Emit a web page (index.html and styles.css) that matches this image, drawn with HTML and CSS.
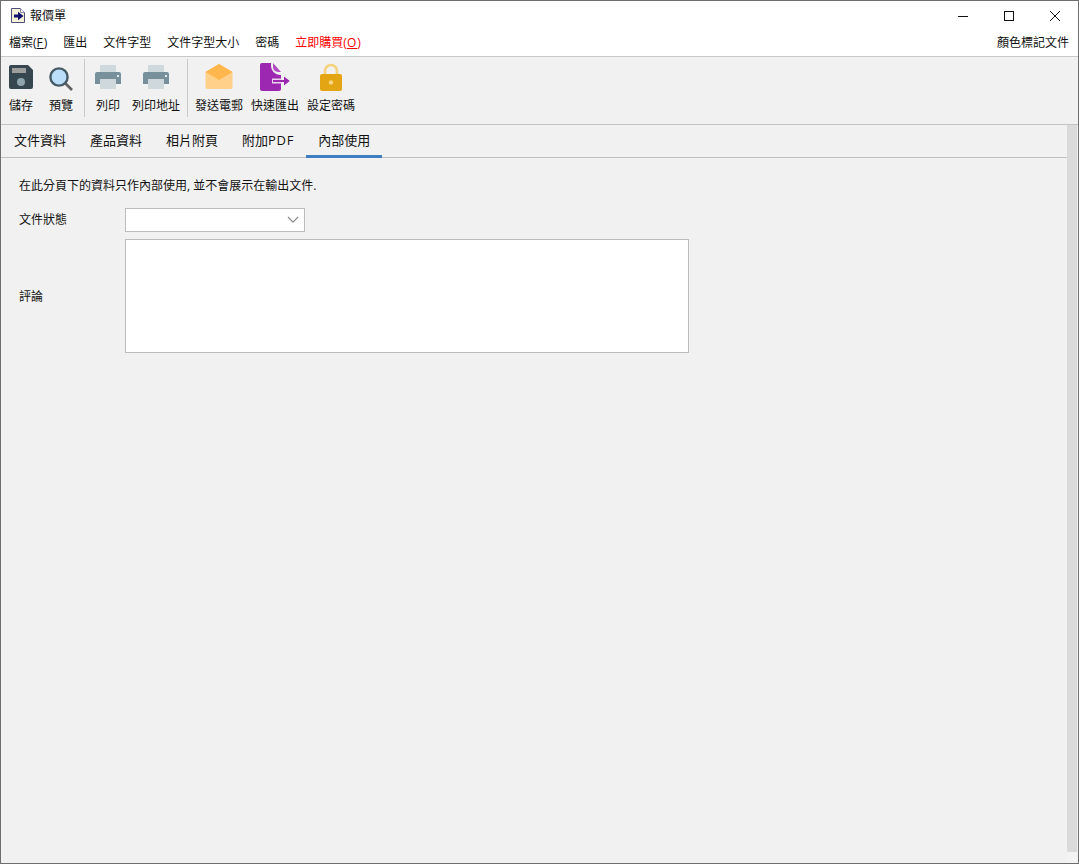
FILE: index.html
```html
<!DOCTYPE html>
<html lang="zh-Hant">
<head>
  <meta charset="UTF-8">
  <title>報價單</title>
  <link rel="stylesheet" href="styles.css">
</head>
<body>
  <div class="window">
    <header class="titlebar">
      <svg class="app-icon" width="14" height="16" viewBox="0 0 14 16">
        <path d="M.5 .5H9.5L13.5 4.5V14.5H.5Z" fill="#f5f1d6" stroke="#4d4d80"/>
        <path d="M9.5 .5V4.5H13.5" fill="#fff" stroke="#8a8aa8"/>
        <path d="M3 6.5H7V3.8L12.5 8L7 12.2V9.5H3Z" fill="#12126e"/>
      </svg>
      <span class="title">報價單</span>
      <div class="win-controls">
        <svg width="46" height="30" viewBox="0 0 46 30"><path d="M18 15.5H28" stroke="#111"/></svg>
        <svg width="46" height="30" viewBox="0 0 46 30"><rect x="18.5" y="10.5" width="9" height="9" fill="none" stroke="#111"/></svg>
        <svg width="46" height="30" viewBox="0 0 46 30"><path d="M18 10L28 20M28 10L18 20" stroke="#111"/></svg>
      </div>
    </header>

    <nav class="menubar">
      <span>檔案(<u>F</u>)</span>
      <span>匯出</span>
      <span>文件字型</span>
      <span>文件字型大小</span>
      <span>密碼</span>
      <span class="buy">立即購買(<u>O</u>)</span>
      <span class="menu-right">顏色標記文件</span>
    </nav>

    <div class="toolbar">
      <div class="tool">
        <svg width="24" height="28" viewBox="0 0 24 28">
          <path d="M2 2H19L24 7V24A2 2 0 0 1 22 26H2A2 2 0 0 1 0 24V4A2 2 0 0 1 2 2Z" fill="#37474f"/>
          <rect x="3" y="5" width="14" height="5" fill="#9e9e9e"/>
          <circle cx="12" cy="19" r="4" fill="#90a4ae"/>
        </svg>
        <span>儲存</span>
      </div>
      <div class="tool">
        <svg width="24" height="28" viewBox="0 0 24 28">
          <path d="M15 19L23 27" stroke="#616161" stroke-width="2.6"/>
          <circle cx="10" cy="14" r="8.6" fill="#bbdefb" stroke="#455a64" stroke-width="2.4"/>
        </svg>
        <span>預覽</span>
      </div>
      <div class="sep"></div>
      <div class="tool">
        <svg width="28" height="28" viewBox="0 0 28 28">
          <rect x="6" y="2" width="16" height="8" fill="#cfd8dc"/>
          <path d="M3 9H25A2 2 0 0 1 27 11V21H1V11A2 2 0 0 1 3 9Z" fill="#78909c"/>
          <rect x="6" y="16" width="16" height="10" fill="#cfd8dc"/>
          <rect x="23" y="12" width="2" height="2" fill="#e3e8ea"/>
        </svg>
        <span>列印</span>
      </div>
      <div class="tool wide">
        <svg width="28" height="28" viewBox="0 0 28 28">
          <rect x="6" y="2" width="16" height="8" fill="#cfd8dc"/>
          <path d="M3 9H25A2 2 0 0 1 27 11V21H1V11A2 2 0 0 1 3 9Z" fill="#78909c"/>
          <rect x="6" y="16" width="16" height="10" fill="#cfd8dc"/>
          <rect x="23" y="12" width="2" height="2" fill="#e3e8ea"/>
        </svg>
        <span>列印地址</span>
      </div>
      <div class="sep"></div>
      <div class="tool wide">
        <svg width="28" height="28" viewBox="0 0 28 28">
          <path d="M14 1L27.5 9V24A2 2 0 0 1 25.5 26H2.500A2 2 0 0 1 .5 24V9Z" fill="#ffd08a"/>
          <path d="M14 1L27.5 9L14 17L.5 9Z" fill="#ffb74d"/>
        </svg>
        <span>發送電郵</span>
      </div>
      <div class="tool wide">
        <svg width="30" height="28" viewBox="0 0 30 28">
          <path d="M2 0H11V3A9 9 0 0 0 20 12H21V26A2 2 0 0 1 19 28H2A2 2 0 0 1 0 26V2A2 2 0 0 1 2 0Z" fill="#9c27b0"/>
          <path d="M13 0L21 9H18A5 5 0 0 1 13 4Z" fill="#b04bc2"/>
          <rect x="12" y="15.5" width="10" height="5" fill="#e9d3ee"/>
          <path d="M13 17H24V13.5L29.8 18L24 22.5V19H13Z" fill="#9c27b0"/>
        </svg>
        <span>快速匯出</span>
      </div>
      <div class="tool wide">
        <svg width="24" height="28" viewBox="0 0 24 28">
          <path d="M6 12V8A6 6 0 0 1 18 8V12" fill="none" stroke="#f5d27c" stroke-width="2.6"/>
          <rect x="1" y="11" width="22" height="17" rx="2" fill="#e3a514"/>
          <circle cx="12" cy="19.5" r="2.2" fill="#f7d580"/>
        </svg>
        <span>設定密碼</span>
      </div>
    </div>

    <div class="body-area">
      <main class="content">
        <div class="tabs">
          <div class="tab">文件資料</div>
          <div class="tab">產品資料</div>
          <div class="tab">相片附頁</div>
          <div class="tab">附加<span class="latin">PDF</span></div>
          <div class="tab active">內部使用</div>
        </div>
        <div class="panel">
          <p class="note">在此分頁下的資料只作內部使用, 並不會展示在輸出文件.</p>
          <div class="form">
            <label>文件狀態</label>
            <div class="select">
              <svg width="12" height="8" viewBox="0 0 12 8"><path d="M1 1L6 6.2L11 1" fill="none" stroke="#888" stroke-width="1.1"/></svg>
            </div>
            <label class="comment-label">評論</label>
            <div class="textarea"></div>
          </div>
        </div>
      </main>
      <aside class="scrollbar">
        <div class="scroll-track"></div>
        <div class="scroll-end"></div>
      </aside>
    </div>
  </div>
</body>
</html>
```

FILE: styles.css
```css
/* Base */
* {
  margin: 0;
  padding: 0;
  box-sizing: border-box;
}

body {
  font-family: "Open Sans", "Noto Sans CJK TC", sans-serif;
  font-size: 12px;
  line-height: 16px;
  color: #111;
  background-color: #f1f1f1;
}

.window {
  display: flex;
  flex-direction: column;
  height: 100vh;
  border: 1px solid #6e6e6e;
  background-color: #f1f1f1;
}

/* Title bar */
.titlebar {
  display: flex;
  align-items: center;
  height: 29px;
  padding-left: 10px;
  background-color: #fff;
}

.app-icon {
  margin-right: 5px;
}

.win-controls {
  display: flex;
  margin-left: auto;
}

/* Menu */
.menubar {
  display: flex;
  gap: 16px;
  align-items: center;
  height: 27px;
  padding: 0 9px 0 8px;
  background-color: #fff;
  border-bottom: 1px solid #c8c8c8;
}

.menubar u {
  letter-spacing: 1px;
}

.buy {
  color: #f00;
}

.menu-right {
  margin-left: auto;
}

/* Toolbar */
.toolbar {
  display: flex;
  height: 68px;
  border-bottom: 1px solid #c4c4c4;
}

.tool {
  display: flex;
  flex-direction: column;
  align-items: center;
  justify-content: space-between;
  width: 40px;
  height: 60px;
  padding: 6px 0 3px;
}

.tool.wide {
  width: 56px;
}

.sep {
  width: 1px;
  height: 58px;
  margin: 2px 3px 0;
  background-color: #c8c8c8;
}

/* Tabs and panel */
.body-area {
  display: flex;
  flex: 1;
  min-height: 0;
}

.content {
  flex: 1;
}

.tabs {
  display: flex;
  height: 33px;
  padding-left: 1px;
  border-bottom: 1px solid #c0c0c0;
}

.tab {
  height: 33px;
  padding: 7px 12px 0;
  font-size: 13px;
}

.tab .latin {
  letter-spacing: .7px;
}

.tab.active {
  border-bottom: 3px solid #3f7fbf;
}

.panel {
  padding: 20px 18px;
}

.note {
  margin-bottom: 14px;
}

.form {
  display: grid;
  grid-template-columns: 106px 564px;
  row-gap: 7px;
  align-items: center;
}

.comment-label {
  padding-top: 2px;
}

.select {
  display: flex;
  align-items: center;
  justify-content: flex-end;
  width: 180px;
  height: 24px;
  padding-right: 5px;
  background-color: #fff;
  border: 1px solid #bdbdbd;
}

.textarea {
  height: 114px;
  background-color: #fff;
  border: 1px solid #bdbdbd;
}

/* Scrollbar */
.scrollbar {
  display: flex;
  flex-direction: column;
  width: 10px;
  margin-right: 1px;
}

.scroll-track {
  flex: 1;
  background-color: #dadada;
}

.scroll-end {
  height: 11px;
  background-color: #f3f3f3;
}
```
